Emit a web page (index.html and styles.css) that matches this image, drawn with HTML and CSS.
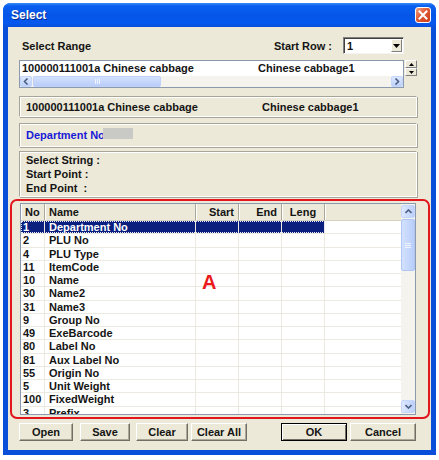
FILE: index.html
```html
<!DOCTYPE html>
<html>
<head>
<meta charset="utf-8">
<title>Select</title>
<link rel="stylesheet" href="styles.css">
</head>
<body>
<div class="window">
  <div class="titlebar">
    <span class="title">Select</span>
    <span class="close"><svg width="14" height="14" viewBox="0 0 14 14"><path d="M3.5 3.5 L10.5 10.5 M10.5 3.5 L3.5 10.5" stroke="#fff" stroke-width="2" stroke-linecap="square"/></svg></span>
  </div>
  <div class="client">
    <div class="toprow">
      <span class="range">Select Range</span>
      <span class="startrow">Start Row :</span>
      <div class="combo">
        <span class="combo-val">1</span>
        <span class="combo-btn"><svg width="7" height="4" viewBox="0 0 7 4"><path d="M0 0 H7 L3.5 4 Z" fill="#000"/></svg></span>
      </div>
    </div>
    <div class="srcrow">
      <div class="srclist">
        <div class="srcline"><span class="c1">100000111001a Chinese cabbage</span><span>Chinese cabbage1</span></div>
        <div class="hscroll">
          <span class="sbtn"><svg width="6" height="7" viewBox="0 0 6 7"><path d="M4.5 0.5 L1.5 3.5 L4.5 6.5" stroke="#4d6185" stroke-width="1.6" fill="none"/></svg></span>
          <span class="hthumb"><svg width="6" height="5" viewBox="0 0 6 5"><path d="M1.5 0 V5 M3.5 0 V5 M5.5 0 V5" stroke="#eef3fd" stroke-width="1"/></svg></span>
          <span class="htrack"></span>
          <span class="sbtn"><svg width="6" height="7" viewBox="0 0 6 7"><path d="M1.5 0.5 L4.5 3.5 L1.5 6.5" stroke="#4d6185" stroke-width="1.6" fill="none"/></svg></span>
        </div>
      </div>
      <div class="spin">
        <span class="spin-btn"><svg width="5" height="3" viewBox="0 0 5 3"><path d="M0 3 H5 L2.5 0 Z" fill="#000"/></svg></span>
        <span class="spin-btn"><svg width="5" height="3" viewBox="0 0 5 3"><path d="M0 0 H5 L2.5 3 Z" fill="#000"/></svg></span>
      </div>
    </div>
    <div class="panel p1"><span class="c1">100000111001a Chinese cabbage</span><span>Chinese cabbage1</span></div>
    <div class="panel p2"><span class="dept">Department No</span><span class="grayfield"></span></div>
    <div class="panel p3">
      <div>Select String :</div>
      <div>Start Point :</div>
      <div>End Point&nbsp; :</div>
    </div>
    <div class="redbox">
      <div class="listview">
        <div class="lv-main">
          <div class="lv-head">
            <span class="h">No</span>
            <span class="h">Name</span>
            <span class="h r">Start</span>
            <span class="h r">End</span>
            <span class="h c">Leng</span>
            <span class="h last"></span>
          </div>
          <div class="lv-body">
            <div class="row sel"><span>1</span><span>Department No</span><span></span><span></span><span></span><span class="f"></span><i class="focus"></i></div>
            <div class="row"><span>2</span><span>PLU No</span><span></span><span></span><span></span><span class="f"></span></div>
            <div class="row"><span>4</span><span>PLU Type</span><span></span><span></span><span></span><span class="f"></span></div>
            <div class="row"><span>11</span><span>ItemCode</span><span></span><span></span><span></span><span class="f"></span></div>
            <div class="row"><span>10</span><span>Name</span><span></span><span></span><span></span><span class="f"></span></div>
            <div class="row"><span>30</span><span>Name2</span><span></span><span></span><span></span><span class="f"></span></div>
            <div class="row"><span>31</span><span>Name3</span><span></span><span></span><span></span><span class="f"></span></div>
            <div class="row"><span>9</span><span>Group No</span><span></span><span></span><span></span><span class="f"></span></div>
            <div class="row"><span>49</span><span>ExeBarcode</span><span></span><span></span><span></span><span class="f"></span></div>
            <div class="row"><span>80</span><span>Label No</span><span></span><span></span><span></span><span class="f"></span></div>
            <div class="row"><span>81</span><span>Aux Label No</span><span></span><span></span><span></span><span class="f"></span></div>
            <div class="row"><span>55</span><span>Origin No</span><span></span><span></span><span></span><span class="f"></span></div>
            <div class="row"><span>5</span><span>Unit Weight</span><span></span><span></span><span></span><span class="f"></span></div>
            <div class="row"><span>100</span><span>FixedWeight</span><span></span><span></span><span></span><span class="f"></span></div>
            <div class="row"><span>3</span><span>Prefix</span><span></span><span></span><span></span><span class="f"></span></div>
          </div>
        </div>
        <div class="vscroll">
          <span class="vbtn"><svg width="7" height="5" viewBox="0 0 7 5"><path d="M0.5 4 L3.5 1 L6.5 4" stroke="#4d6185" stroke-width="1.6" fill="none"/></svg></span>
          <span class="vthumb"><svg width="6" height="6" viewBox="0 0 6 6"><path d="M0 1.5 H6 M0 3.5 H6 M0 5.5 H6" stroke="#eef3fd" stroke-width="1"/></svg></span>
          <span class="vtrack"></span>
          <span class="vbtn"><svg width="7" height="5" viewBox="0 0 7 5"><path d="M0.5 1 L3.5 4 L6.5 1" stroke="#4d6185" stroke-width="1.6" fill="none"/></svg></span>
        </div>
      </div>
      <span class="marker">A</span>
    </div>
    <div class="buttons">
      <span class="btn b-open">Open</span>
      <span class="btn b-save">Save</span>
      <span class="btn b-clear">Clear</span>
      <span class="btn b-clearall">Clear All</span>
      <span class="btn b-ok">OK</span>
      <span class="btn b-cancel">Cancel</span>
    </div>
  </div>
</div>
</body>
</html>
```
FILE: styles.css
```css
* { box-sizing: border-box; }
body {
  margin: 0;
  background: #fff;
  font-family: "Liberation Sans", Arial, sans-serif;
  font-size: 11px;
  font-weight: bold;
  color: #141414;
}
.window {
  margin: 3px 0 0 3px;
  width: 433px;
  height: 452px;
  background: #0a4fd9;
  border-radius: 8px 8px 0 0;
  display: flex;
  flex-direction: column;
  padding: 0 5px 5px 5px;
}
.titlebar {
  margin: 0 -5px;
  height: 24px;
  flex: none;
  border-radius: 7px 7px 0 0;
  background: linear-gradient(#3b8cf8 0%, #0a5fef 12%, #0556e8 50%, #0558ee 85%, #0a4fd9 100%);
  display: flex;
  align-items: center;
  justify-content: space-between;
  padding: 0 5px 0 8px;
}
.title {
  color: #fff;
  font-size: 12px;
  font-weight: bold;
  text-shadow: 1px 1px 0 #0a2a8a;
}
.close {
  width: 16px;
  height: 16px;
  border: 1px solid #fff;
  border-radius: 3px;
  background: linear-gradient(135deg, #f4a183 0%, #e15a35 45%, #c83a19 100%);
  display: flex;
  align-items: center;
  justify-content: center;
}
.client {
  flex: 1;
  background: #ece9d8;
  padding: 0 14px 0 11px;
  display: flex;
  flex-direction: column;
}
.toprow {
  margin-top: 10px;
  height: 17px;
  display: flex;
  align-items: center;
}
.range { flex: 1; padding-left: 3px; }
.startrow { margin-right: 11px; }
.combo {
  width: 61px;
  height: 17px;
  margin-right: 13px;
  background: #fff;
  border: 1px solid;
  border-color: #808080 #f4f4f4 #f4f4f4 #808080;
  box-shadow: inset 1px 1px 0 #404040;
  display: flex;
  align-items: center;
}
.combo-val { flex: 1; padding-left: 3px; }
.combo-btn {
  width: 11px;
  height: 13px;
  margin-right: 1px;
  background: #ece9d8;
  border: 1px solid;
  border-color: #fff #808080 #808080 #fff;
  display: flex;
  align-items: center;
  justify-content: center;
}
.srcrow {
  margin-top: 6px;
  height: 28px;
  display: flex;
  align-items: flex-start;
}
.srclist {
  width: 385px;
  height: 28px;
  background: #fff;
  border: 1px solid #8a99ad;
  display: flex;
  flex-direction: column;
}
.srcline {
  height: 15px;
  line-height: 15px;
  padding-left: 2px;
  display: flex;
  white-space: nowrap;
}
.c1 { width: 236px; flex: none; }
.hscroll {
  height: 11px;
  display: flex;
  background: #f4f3ee;
}
.sbtn {
  width: 12px;
  height: 11px;
  border-radius: 2px;
  background: linear-gradient(#dde8fe, #bcd0f9);
  border: 1px solid #c5d6fb;
  display: flex;
  align-items: center;
  justify-content: center;
}
.hthumb {
  width: 128px;
  margin-left: 1px;
  background: linear-gradient(#d3e1fd, #b8cdf9);
  border: 1px solid #c0d2f8;
  border-radius: 2px;
  display: flex;
  align-items: center;
  justify-content: center;
}
.htrack { flex: 1; }
.spin {
  width: 12px;
  height: 16px;
  margin-left: 1px;
  display: flex;
  flex-direction: column;
}
.spin-btn {
  height: 8px;
  background: #ece9d8;
  border: 1px solid;
  border-color: #fff #808080 #808080 #fff;
  display: flex;
  align-items: center;
  justify-content: center;
}
.panel {
  border: 1px solid;
  border-color: #a7a597 #fff #fff #a7a597;
  box-shadow: 1px 1px 0 #a7a597, inset 1px 1px 0 #fff;
}
.p1 {
  margin-top: 8px;
  height: 21px;
  padding-left: 6px;
  display: flex;
  align-items: center;
  white-space: nowrap;
}
.p2 {
  margin-top: 6px;
  height: 24px;
  padding-left: 6px;
  display: flex;
  align-items: center;
}
.dept { color: #1a1ad6; }
.grayfield {
  width: 30px;
  height: 11px;
  background: #c9c9c6;
  margin-top: -3px;
  margin-left: -2px;
}
.p3 {
  margin-top: 4px;
  height: 46px;
  padding: 1px 0 0 6px;
  line-height: 14px;
}
.redbox {
  position: relative;
  margin: 2px -13px 0 -9px;
  height: 220px;
  border: 2px solid #e2161d;
  border-radius: 7px;
  padding: 2px 12px 2px 8px;
}
.listview {
  height: 212px;
  border: 1px solid #8a99ad;
  background: #fff;
  display: flex;
}
.lv-main {
  flex: 1;
  overflow: hidden;
  display: flex;
  flex-direction: column;
}
.lv-head {
  height: 17px;
  flex: none;
  display: grid;
  grid-template-columns: 24px 151px 43px 43px 43px 1fr;
  background: #ece9d8;
  border-bottom: 1px solid #d6d2c2;
}
.h {
  line-height: 16px;
  padding: 0 4px;
  border-right: 1px solid #aca899;
  box-shadow: inset 1px 0 0 #fff;
  white-space: nowrap;
}
.h.r { text-align: right; }
.h.c { text-align: center; }
.h.last { border-right: none; }
.lv-body { flex: 1; }
.row {
  height: 13.25px;
  display: grid;
  grid-template-columns: 24px 151px 43px 43px 43px 1fr;
  border-bottom: 1px solid #ece9e0;
  line-height: 12.5px;
  position: relative;
}
.row span {
  border-right: 1px solid #ece9e0;
  padding-left: 4px;
  white-space: nowrap;
  overflow: hidden;
}
.row span:first-child { padding-left: 2px; }
.row span.f { border-right: none; }
.row.sel span { background: #0b1f7f; color: #fff; }
.row.sel span.f { background: #fff; }
.focus {
  position: absolute;
  left: 0;
  top: 0;
  width: 304px;
  height: 12.25px;
  border: 1px dotted #e8e8ff;
}
.vscroll {
  width: 14px;
  flex: none;
  background: #f4f3ee;
  display: flex;
  flex-direction: column;
  padding: 1px 0;
}
.vbtn {
  height: 13px;
  border-radius: 2px;
  background: linear-gradient(90deg, #dde8fe, #bcd0f9);
  border: 1px solid #c5d6fb;
  display: flex;
  align-items: center;
  justify-content: center;
}
.vthumb {
  height: 52px;
  margin-top: 1px;
  border-radius: 2px;
  background: linear-gradient(90deg, #d3e1fd, #b8cdf9);
  border: 1px solid #b0c6f4;
  display: flex;
  align-items: center;
  justify-content: center;
}
.vtrack { flex: 1; }
.marker {
  position: absolute;
  left: 190px;
  top: 70px;
  font-size: 20px;
  font-weight: bold;
  color: #ea1a1a;
}
.buttons {
  margin-top: 4px;
  height: 18px;
  display: flex;
}
.btn {
  height: 18px;
  background: #ece9d8;
  border: 1px solid;
  border-color: #fff #716f64 #716f64 #fff;
  box-shadow: inset -1px -1px 0 #aca899;
  display: flex;
  align-items: center;
  justify-content: center;
}
.b-open { width: 54px; }
.b-save { width: 50px; margin-left: 7px; }
.b-clear { width: 52px; margin-left: 6px; }
.b-clearall { width: 56px; margin-left: 3px; }
.b-ok {
  width: 66px;
  margin-left: 34px;
  border: 1px solid #000;
  box-shadow: inset 1px 1px 0 #fff, inset -1px -1px 0 #716f64;
}
.b-cancel { width: 66px; margin-left: 3px; }
```
